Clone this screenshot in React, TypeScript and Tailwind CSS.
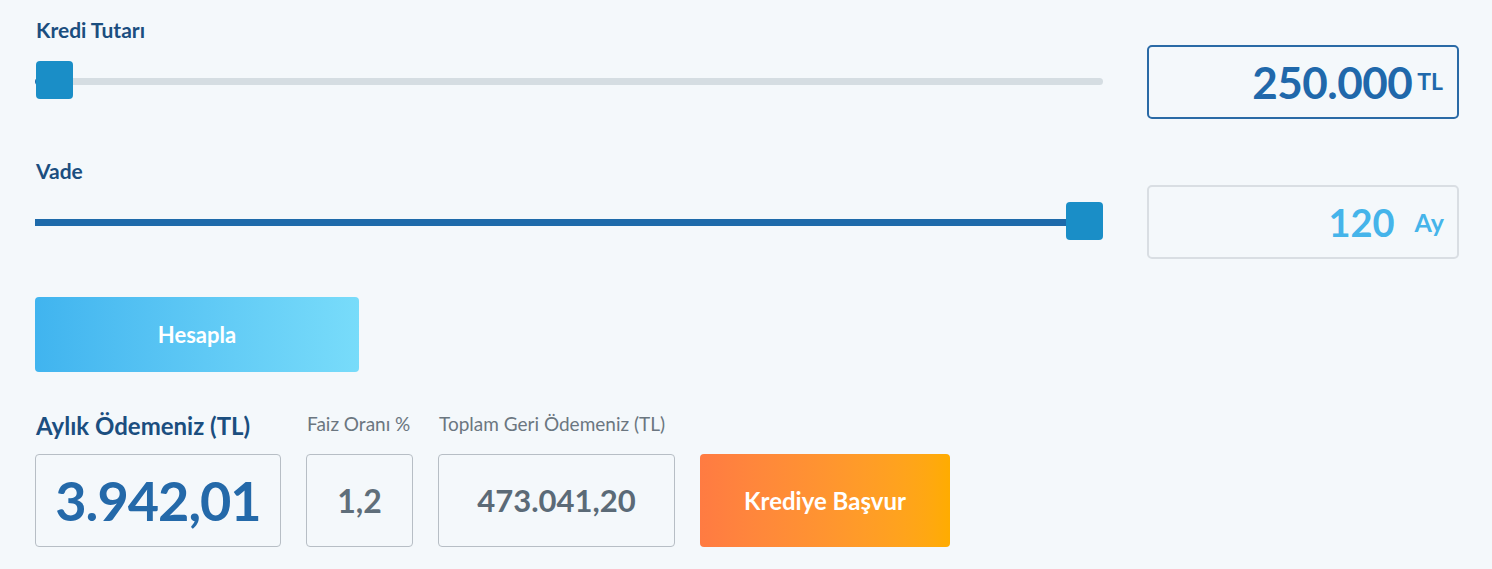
import React from 'react';

interface SliderProps {
  percent: number;
  filled?: boolean;
}

const Slider: React.FC<SliderProps> = ({ percent, filled }) => {
  return (
    <div className="relative h-[38px] w-full">
      <div className="absolute left-0 right-0 top-[17px] h-[7px] rounded-full bg-[#d5dde2]" />
      {filled && (
        <div
          className="absolute left-0 top-[17px] h-[7px] bg-[#1e6aaa]"
          style={{ width: `calc(${percent}% - 18px)` }}
        />
      )}
      {!filled && <div className="absolute left-0 top-[17px] h-[7px] w-[4px] rounded-l-full bg-[#1e6aaa]" />}
      <div
        className="absolute top-0 h-[38px] w-[37px] rounded-[4px] bg-[#1a8ec7]"
        style={{ left: `calc(${percent}% - ${(percent / 100) * 37}px + ${percent === 0 ? 1 : 0}px)` }}
      />
    </div>
  );
};

export default function App() {
  return (
    <div className="h-[569px] w-full bg-[#f4f8fb] pl-[35px] pr-[33px] pt-[16px] font-['Lato','Open_Sans',sans-serif]">
      {/* Kredi Tutarı */}
      <div className="flex items-start gap-[44px]">
        <div className="w-[1068px]">
          <div className="pl-[1px] text-[21px] leading-[28px] font-bold text-[#1b4e7f]">Kredi Tutarı</div>
          <div className="mt-[17px]">
            <Slider percent={0} />
          </div>
        </div>
        <div className="mt-[29px] flex h-[74px] w-[312px] items-center justify-end rounded-[5px] border-2 border-[#2a6aa6] pr-[14px]">
          <span className="text-[44px] leading-none font-bold tracking-[-0.5px] text-[#2068ab]">250.000</span>
          <span className="ml-[5px] mb-[2px] text-[23px] leading-none font-bold text-[#2068ab]">TL</span>
        </div>
      </div>

      {/* Vade */}
      <div className="mt-[38px] flex items-start gap-[44px]">
        <div className="w-[1068px]">
          <div className="pl-[1px] text-[21px] leading-[28px] font-bold text-[#1b4e7f]">Vade</div>
          <div className="mt-[17px]">
            <Slider percent={100} filled />
          </div>
        </div>
        <div className="mt-[28px] flex h-[74px] w-[312px] items-center justify-end rounded-[5px] border-2 border-[#d9dee3] pr-[13px]">
          <span className="text-[38px] leading-none font-bold text-[#45b4ea]">120</span>
          <span className="ml-[20px] text-[25px] leading-none font-bold text-[#45b4ea]">Ay</span>
        </div>
      </div>

      {/* Hesapla */}
      <button className="mt-[38px] flex h-[75px] w-[324px] items-center justify-center rounded-[4px] bg-gradient-to-r from-[#40b4ef] to-[#78dcfa] text-[22px] font-bold text-white">
        Hesapla
      </button>

      {/* Sonuçlar */}
      <div className="mt-[35px] flex items-start">
        <div className="flex w-[246px] flex-col">
          <div className="mt-[3px] whitespace-nowrap pl-[1px] text-[24px] leading-[32px] font-bold text-[#1b4e7f]">
            Aylık Ödemeniz (TL)
          </div>
          <div className="mt-[12px] flex h-[93px] items-center justify-center rounded-[4px] border border-[#b7bec5]">
            <span className="text-[54px] leading-none font-bold tracking-[-1px] text-[#2469a9]">3.942,01</span>
          </div>
        </div>
        <div className="ml-[25px] flex w-[107px] flex-col">
          <div className="mt-[5px] whitespace-nowrap pl-[1px] text-[19px] leading-[24px] text-[#6b7680]">Faiz Oranı %</div>
          <div className="mt-[18px] flex h-[93px] items-center justify-center rounded-[4px] border border-[#b7bec5]">
            <span className="text-[32px] leading-none font-bold text-[#5f6e7a]">1,2</span>
          </div>
        </div>
        <div className="ml-[25px] flex w-[237px] flex-col">
          <div className="mt-[5px] whitespace-nowrap pl-[1px] text-[19px] leading-[24px] text-[#6b7680]">
            Toplam Geri Ödemeniz (TL)
          </div>
          <div className="mt-[18px] flex h-[93px] items-center justify-center rounded-[4px] border border-[#b7bec5]">
            <span className="text-[31px] leading-none font-bold text-[#5b6a77]">473.041,20</span>
          </div>
        </div>
        <button className="ml-[25px] mt-[47px] flex h-[93px] w-[250px] items-center justify-center rounded-[4px] bg-gradient-to-r from-[#ff7b42] to-[#ffac00] text-[24px] font-bold text-white">
          Krediye Başvur
        </button>
      </div>
    </div>
  );
}
